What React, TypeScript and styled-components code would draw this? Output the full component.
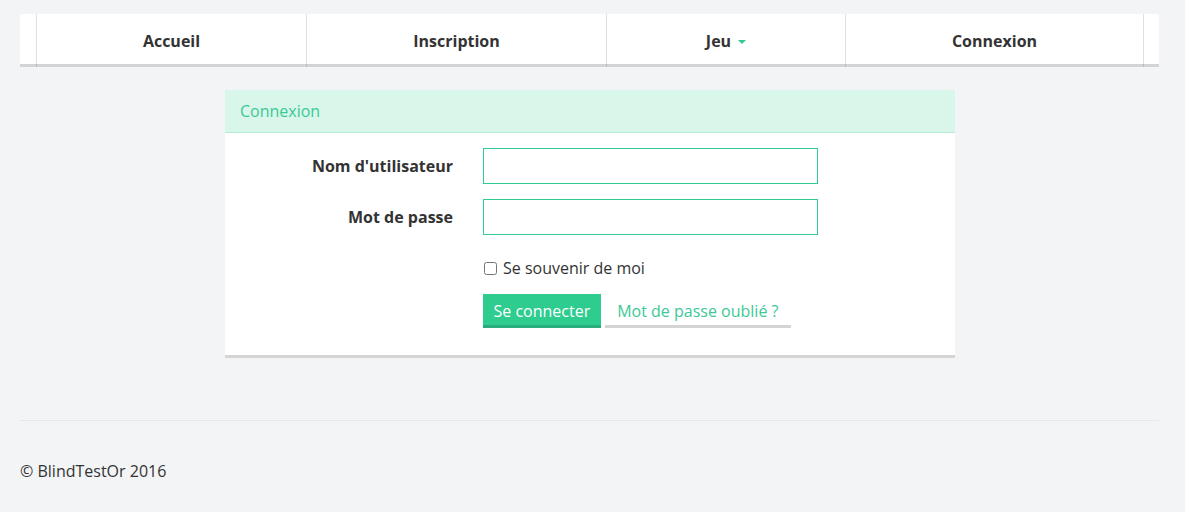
import styled, { createGlobalStyle } from "styled-components";

const GlobalStyle = createGlobalStyle`
  html, body {
    margin: 0;
    padding: 0;
    background: #f3f4f6;
    font-family: "Open Sans", "Liberation Sans", sans-serif;
    font-size: 16px;
    line-height: 22px;
    color: #333;
  }
  * {
    box-sizing: border-box;
  }
`;

const Page = styled.div`
  padding: 14px 26px 30px 20px;
`;

const Navbar = styled.nav`
  display: flex;
  height: 53px;
  background: #fff;
  box-shadow: inset 0 -3px 0 rgba(0, 0, 0, 0.17);
`;

const NavEdge = styled.div<{ $w: number; $line?: boolean }>`
  width: ${(p) => p.$w}px;
  border-left: ${(p) => (p.$line ? "1px solid rgba(0, 0, 0, 0.12)" : "none")};
`;

const NavItem = styled.a<{ $w: number }>`
  display: flex;
  align-items: center;
  justify-content: center;
  width: ${(p) => p.$w}px;
  padding-top: 1px;
  border-left: 1px solid rgba(0, 0, 0, 0.12);
  font-weight: 700;
  color: #333;
  text-decoration: none;
  cursor: pointer;
`;

const Caret = styled.span`
  display: inline-block;
  margin-left: 7px;
  margin-top: 2px;
  border-top: 4px solid #2ecc8f;
  border-left: 4px solid transparent;
  border-right: 4px solid transparent;
`;

const Panel = styled.section`
  width: 730px;
  margin: 23px 0 0 205px;
  background: #fff;
  box-shadow: 0 3px 0 #d4d4d4;
`;

const PanelHeading = styled.header`
  padding: 10px 15px;
  background: #d9f6ea;
  border-bottom: 1px solid #b8eed8;
  color: #3cc996;
`;

const PanelBody = styled.div`
  padding: 15px 15px 12px;
`;

const FormRow = styled.div<{ $gap?: number }>`
  display: grid;
  grid-template-columns: 213px 335px;
  column-gap: 30px;
  align-items: center;
  margin-bottom: ${(p) => p.$gap ?? 15}px;
`;

const Label = styled.label`
  text-align: right;
  font-weight: 700;
`;

const Input = styled.input`
  height: 36px;
  width: 335px;
  border: 1px solid #2ecc8f;
  border-radius: 0;
  outline: none;
  padding: 6px 12px;
  font: inherit;
  background: #fff;
`;

const CheckLabel = styled.label`
  grid-column: 2;
  display: flex;
  align-items: center;
  gap: 6px;
  padding-top: 7px;
  height: 29px;
  color: #333;

  input {
    margin: 0 0 0 1px;
    width: 13px;
    height: 13px;
    accent-color: #999;
  }
`;

const Actions = styled.div`
  grid-column: 2;
  display: flex;
  align-items: flex-end;
  gap: 4px;
`;

const Button = styled.button`
  height: 34px;
  padding: 6px 10.5px 3px;
  border: none;
  border-bottom: 3px solid #29ad7c;
  border-radius: 0;
  background: #2ecc8f;
  color: #fff;
  font: inherit;
  cursor: pointer;
`;

const LinkButton = styled.a`
  display: block;
  height: 34px;
  padding: 6px 12.5px 3px;
  border-bottom: 3px solid #d4d4d4;
  color: #3cc996;
  text-decoration: none;
  cursor: pointer;
`;

const Footer = styled.footer`
  margin-top: 65px;
  border-top: 1px solid #e6e7ea;
  padding-top: 39px;
`;

const App = () => {
  return (
    <>
      <GlobalStyle />
      <Page>
        <Navbar>
          <NavEdge $w={16} />
          <NavItem $w={270}>Accueil</NavItem>
          <NavItem $w={300}>Inscription</NavItem>
          <NavItem $w={239}>
            Jeu
            <Caret />
          </NavItem>
          <NavItem $w={298}>Connexion</NavItem>
          <NavEdge $w={16} $line />
        </Navbar>

        <Panel>
          <PanelHeading>Connexion</PanelHeading>
          <PanelBody>
            <FormRow>
              <Label htmlFor="username">Nom d'utilisateur</Label>
              <Input id="username" type="text" />
            </FormRow>
            <FormRow>
              <Label htmlFor="password">Mot de passe</Label>
              <Input id="password" type="password" />
            </FormRow>
            <FormRow>
              <CheckLabel>
                <input type="checkbox" />
                Se souvenir de moi
              </CheckLabel>
            </FormRow>
            <FormRow>
              <Actions>
                <Button type="button">Se connecter</Button>
                <LinkButton>Mot de passe oublié ?</LinkButton>
              </Actions>
            </FormRow>
          </PanelBody>
        </Panel>

        <Footer>© BlindTestOr 2016</Footer>
      </Page>
    </>
  );
};

export default App;
